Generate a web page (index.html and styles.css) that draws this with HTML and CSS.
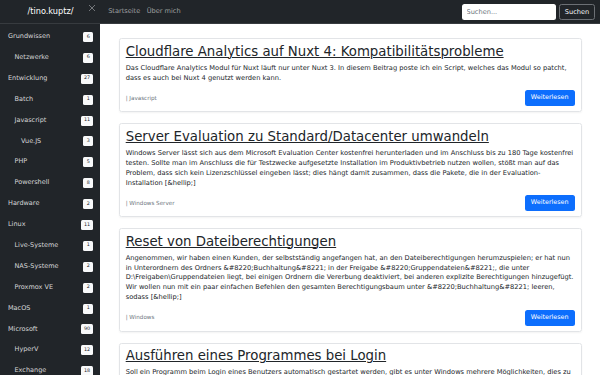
FILE: index.html
```html
<!DOCTYPE html>
<html lang="de">
<head>
<meta charset="utf-8">
<title>/tino.kuptz/</title>
<link rel="stylesheet" href="styles.css">
</head>
<body>
<header class="navbar">
  <div class="brand-area">
    <span></span>
    <a class="brand" href="#">/tino.kuptz/</a>
    <button class="close" aria-label="Schließen">
      <svg viewBox="0 0 16 16" width="8" height="8"><path d="M2 2 L14 14 M14 2 L2 14" stroke="currentColor" stroke-width="1.6" fill="none"/></svg>
    </button>
  </div>
  <nav class="nav-links">
    <a href="#">Startseite</a>
    <a href="#">Über mich</a>
  </nav>
  <form class="search">
    <input type="search" placeholder="Suchen...">
    <button type="button">Suchen</button>
  </form>
</header>
<div class="layout">
  <aside class="sidebar">
    <ul class="cats">
      <li class="cat l0"><span>Grundwissen</span><span class="badge">6</span></li>
      <li class="cat l1"><span>Netzwerke</span><span class="badge">6</span></li>
      <li class="cat l0"><span>Entwicklung</span><span class="badge">27</span></li>
      <li class="cat l1"><span>Batch</span><span class="badge">1</span></li>
      <li class="cat l1"><span>Javascript</span><span class="badge">11</span></li>
      <li class="cat l2"><span>Vue.JS</span><span class="badge">3</span></li>
      <li class="cat l1"><span>PHP</span><span class="badge">5</span></li>
      <li class="cat l1"><span>Powershell</span><span class="badge">8</span></li>
      <li class="cat l0"><span>Hardware</span><span class="badge">2</span></li>
      <li class="cat l0"><span>Linux</span><span class="badge">11</span></li>
      <li class="cat l1"><span>Live-Systeme</span><span class="badge">1</span></li>
      <li class="cat l1"><span>NAS-Systeme</span><span class="badge">2</span></li>
      <li class="cat l1"><span>Proxmox VE</span><span class="badge">2</span></li>
      <li class="cat l0"><span>MacOS</span><span class="badge">1</span></li>
      <li class="cat l0"><span>Microsoft</span><span class="badge">90</span></li>
      <li class="cat l1"><span>HyperV</span><span class="badge">12</span></li>
      <li class="cat l1"><span>Exchange</span><span class="badge">18</span></li>
    </ul>
  </aside>
  <main class="content">
    <article class="card">
      <h2 class="card-title"><a href="#">Cloudflare Analytics auf Nuxt 4: Kompatibilitätsprobleme</a></h2>
      <p class="card-text">Das Cloudflare Analytics Modul für Nuxt läuft nur unter Nuxt 3. In diesem Beitrag poste ich ein Script, welches das Modul so patcht, dass es auch bei Nuxt 4 genutzt werden kann.</p>
      <div class="card-foot"><small class="cats-label">| Javascript</small><a class="btn" href="#">Weiterlesen</a></div>
    </article>
    <article class="card">
      <h2 class="card-title"><a href="#">Server Evaluation zu Standard/Datacenter umwandeln</a></h2>
      <p class="card-text">Windows Server lässt sich aus dem Microsoft Evaluation Center kostenfrei herunterladen und im Anschluss bis zu 180 Tage kostenfrei testen. Sollte man im Anschluss die für Testzwecke aufgesetzte Installation im Produktivbetrieb nutzen wollen, stößt man auf das Problem, dass sich kein Lizenzschlüssel eingeben lässt; dies hängt damit zusammen, dass die Pakete, die in der Evaluation-Installation [&amp;hellip;]</p>
      <div class="card-foot"><small class="cats-label">| Windows Server</small><a class="btn" href="#">Weiterlesen</a></div>
    </article>
    <article class="card">
      <h2 class="card-title"><a href="#">Reset von Dateiberechtigungen</a></h2>
      <p class="card-text">Angenommen, wir haben einen Kunden, der selbstständig angefangen hat, an den Dateiberechtigungen herumzuspielen; er hat nun in Unterordnern des Ordners &amp;#8220;Buchhaltung&amp;#8221; in der Freigabe &amp;#8220;Gruppendateien&amp;#8221;, die unter D:\Freigaben\Gruppendateien liegt, bei einigen Ordnern die Vererbung deaktiviert, bei anderen explizite Berechtigungen hinzugefügt. Wir wollen nun mit ein paar einfachen Befehlen den gesamten Berechtigungsbaum unter &amp;#8220;Buchhaltung&amp;#8221; leeren, sodass [&amp;hellip;]</p>
      <div class="card-foot"><small class="cats-label">| Windows</small><a class="btn" href="#">Weiterlesen</a></div>
    </article>
    <article class="card">
      <h2 class="card-title"><a href="#">Ausführen eines Programmes bei Login</a></h2>
      <p class="card-text">Soll ein Programm beim Login eines Benutzers automatisch gestartet werden, gibt es unter Windows mehrere Möglichkeiten, dies zu erreichen. In diesem Beitrag zeige ich die gängigsten Varianten [&amp;hellip;]</p>
      <div class="card-foot"><small class="cats-label">| Windows</small><a class="btn" href="#">Weiterlesen</a></div>
    </article>
  </main>
</div>
</body>
</html>
```
FILE: styles.css
```css
* { box-sizing: border-box; }
html, body { margin: 0; padding: 0; }
body {
  font-family: "DejaVu Sans", sans-serif;
  font-size: 6.5px;
  line-height: 1.5;
  color: #212529;
  background: #fff;
  overflow: hidden;
  height: 375px;
}
a { color: inherit; }

.navbar {
  display: flex;
  align-items: center;
  height: 24px;
  background: #212529;
  border-bottom: 1px solid #373b3f;
}
.brand-area {
  width: 100px;
  height: 100%;
  display: grid;
  grid-template-columns: 16px 1fr 16px;
  align-items: center;
}
.brand {
  justify-self: center;
  color: #fff;
  text-decoration: none;
  font-size: 8.2px;
  line-height: 1;
  margin-left: 1px;
}
.close {
  justify-self: center;
  align-self: start;
  margin-top: 4px;
  padding: 0;
  border: 0;
  background: none;
  color: #8a8d90;
  display: flex;
  width: 8px;
  height: 8px;
}
.nav-links {
  display: flex;
  margin-left: 5px;
}
.nav-links a {
  color: rgba(255,255,255,.55);
  text-decoration: none;
  padding: 0 3.2px;
  font-size: 6.6px;
}
.search {
  margin-left: auto;
  margin-right: 5px;
  display: flex;
  gap: 3.3px;
  align-items: center;
}
.search input {
  width: 94px;
  height: 16px;
  border: 0;
  border-radius: 2.5px;
  padding: 0 4.8px;
  font-family: inherit;
  font-size: 6.6px;
  color: #212529;
  background: #fff;
  outline: none;
}
.search input::placeholder { color: #6c757d; }
.search button {
  height: 16px;
  width: 36px;
  padding: 0;
  background: transparent;
  color: #f8f9fa;
  border: 1px solid #6c7075;
  border-radius: 2.5px;
  font-family: inherit;
  font-size: 6.6px;
}

.layout {
  display: flex;
  height: 351px;
}
.sidebar {
  width: 100px;
  flex: none;
  background: #212529;
  padding: 2.5px 6.7px 0 0;
}
.cats {
  list-style: none;
  margin: 0;
  padding: 0;
}
.cat {
  display: flex;
  align-items: center;
  justify-content: space-between;
  height: 20.9px;
  color: rgba(255,255,255,.82);
}
.l0 { padding-left: 8px; }
.l1 { padding-left: 14.5px; }
.l2 { padding-left: 21px; }
.badge {
  display: inline-flex;
  align-items: center;
  justify-content: center;
  min-width: 10px;
  height: 10px;
  padding: 0 3.2px;
  background: #f8f9fa;
  color: #212529;
  border-radius: 1.5px;
  font-size: 4.8px;
  line-height: 1;
}

.content {
  flex: 1;
  padding: 14.3px 18.3px 0 18.7px;
  display: flex;
  flex-direction: column;
  gap: 11px;
  overflow: hidden;
}
.card {
  flex: none;
  border: 1px solid #e2e4e7;
  border-radius: 2.5px;
  padding: 4.5px 6px 5.2px;
  box-shadow: 0 1px 2px rgba(0,0,0,.05);
}
.card-title {
  margin: 0 0 4px;
  font-size: 13.3px;
  font-weight: 400;
  line-height: 16px;
}
.card-title a {
  color: #212529;
  text-decoration: underline;
  text-decoration-thickness: 1px;
}
.card-text {
  margin: 0 0 6.5px;
  font-size: 6.7px;
  line-height: 9.9px;
}
.card-foot {
  display: flex;
  justify-content: space-between;
  align-items: center;
}
.cats-label {
  font-size: 5.6px;
  color: #6c757d;
}
.btn {
  display: inline-flex;
  align-items: center;
  justify-content: center;
  height: 16px;
  padding: 0 5px;
  min-width: 50px;
  background: #0d6efd;
  color: #fff;
  text-decoration: none;
  border-radius: 2.5px;
  font-size: 6.4px;
}
```
